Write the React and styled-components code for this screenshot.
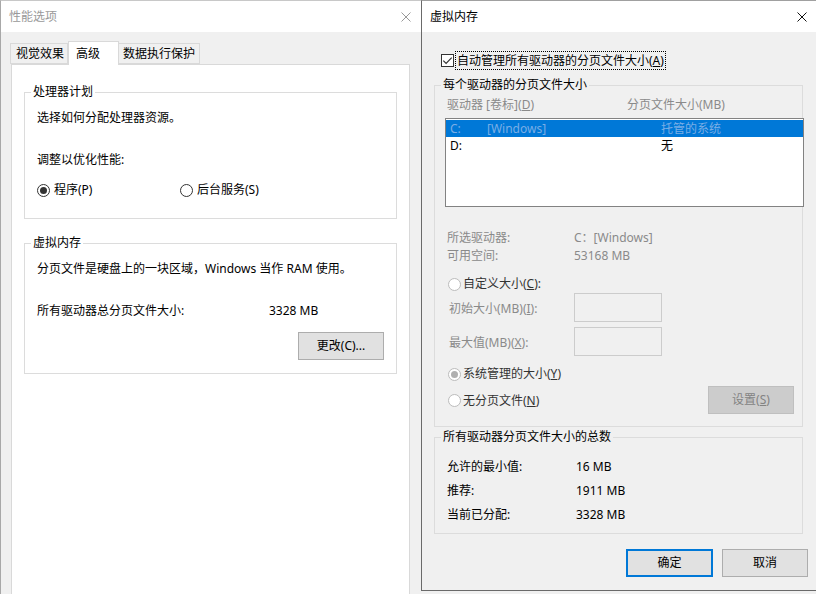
import React from 'react';
import styled, { createGlobalStyle } from 'styled-components';

const GlobalStyle = createGlobalStyle`
  html, body { margin: 0; padding: 0; }
  body {
    background: #f0f0f0;
    font-family: "Noto Sans", "Noto Sans CJK SC", sans-serif;
    font-size: 12px;
    color: #000;
  }
  * { box-sizing: border-box; }
`;

const Desktop = styled.div`
  display: flex;
  width: 816px;
  height: 594px;
  overflow: hidden;
  background: #f0f0f0;
`;

const LeftWindow = styled.div`
  flex: none;
  width: 421px;
  height: 594px;
  display: flex;
  flex-direction: column;
  background: #f0f0f0;
  border-left: 1px solid #a8a8a8;
  border-top: 1px solid #c8c8c8;
`;

const TitleBar = styled.div`
  flex: none;
  height: 31px;
  background: #fff;
  display: flex;
  align-items: center;
  justify-content: space-between;
  padding: 0 ${p => p.$pr}px 0 8px;
  color: ${p => (p.$active ? '#000' : '#999')};
  line-height: 18px;
`;

const CloseIcon = ({ color }) => (
  <svg width="10" height="10" viewBox="0 0 10 10" style={{ display: 'block' }}>
    <path d="M0.5 0.5 L9.5 9.5 M9.5 0.5 L0.5 9.5" stroke={color} strokeWidth="1" fill="none" />
  </svg>
);

const TabStrip = styled.div`
  display: flex;
  align-items: flex-end;
  margin: 9px 0 0 9px;
  height: 23px;
  position: relative;
  z-index: 1;
`;

const Tab = styled.div`
  width: ${p => p.$w}px;
  height: ${p => (p.$selected ? 24 : 21)}px;
  margin-bottom: ${p => (p.$selected ? -1 : 0)}px;
  padding-left: ${p => p.$pl}px;
  display: flex;
  align-items: center;
  border: 1px solid #d9d9d9;
  border-bottom: ${p => (p.$selected ? 'none' : '1px solid #d9d9d9')};
  border-left: ${p => (p.$first || p.$selected ? '1px solid #d9d9d9' : 'none')};
  background: ${p => (p.$selected ? '#fff' : '#f0f0f0')};
  line-height: 18px;
  white-space: nowrap;
`;

const TabPanel = styled.div`
  flex: 1;
  margin-left: 10px;
  width: 399px;
  background: #fff;
  border: 1px solid #d9d9d9;
  border-bottom: none;
  padding: 0 12px;
  display: flex;
  flex-direction: column;
`;

const Group = styled.fieldset`
  margin: ${p => p.$mt}px 0 0 0;
  border: 1px solid #dcdcdc;
  padding: 0 ${p => p.$pr ?? 12}px ${p => p.$pb}px 12px;
  min-width: 0;
  width: ${p => p.$w}px;
  display: flex;
  flex-direction: column;
  align-items: flex-start;
`;

const Legend = styled.legend`
  padding: 0 2px;
  margin-left: -6px;
  line-height: 18px;
  color: #000;
`;

const Line = styled.div`
  margin-top: ${p => p.$mt || 0}px;
  line-height: ${p => p.$lh || 18}px;
  color: ${p => (p.$dim ? '#8a8a8a' : '#000')};
  display: flex;
  align-items: center;
  white-space: nowrap;
  width: 100%;
`;

const Label = styled.span`
  display: inline-block;
  width: ${p => p.$w}px;
  padding-left: ${p => p.$pl || 0}px;
  flex: none;
`;

const RadioWrap = styled.span`
  display: inline-flex;
  align-items: center;
  width: ${p => (p.$w ? `${p.$w}px` : 'auto')};
  margin-left: ${p => p.$ml || 0}px;
  color: ${p => (p.$dim ? '#333' : '#000')};
`;

const Circle = styled.span`
  width: 13px;
  height: 13px;
  border-radius: 50%;
  border: 1px solid ${p => (p.$disabled ? '#bcbcbc' : '#333')};
  background: #fff;
  margin-right: ${p => p.$gap}px;
  display: inline-flex;
  align-items: center;
  justify-content: center;
  flex: none;
  &::after {
    content: '';
    width: 7px;
    height: 7px;
    border-radius: 50%;
    background: ${p => (p.$checked ? (p.$disabled ? '#b0b0b0' : '#333') : 'transparent')};
  }
`;

const Radio = ({ checked, disabled, children, w, ml, gap = 4 }) => (
  <RadioWrap $w={w} $ml={ml} $dim={disabled}>
    <Circle $checked={checked} $disabled={disabled} $gap={gap} />
    <span>{children}</span>
  </RadioWrap>
);

const ButtonRow = styled.div`
  margin-top: ${p => p.$mt}px;
  display: flex;
  justify-content: ${p => p.$justify || 'flex-end'};
  align-items: center;
  gap: 9px;
  width: 100%;
  padding-right: ${p => p.$pr || 0}px;
`;

const Button = styled.div`
  width: ${p => p.$w || 86}px;
  height: 28px;
  display: flex;
  align-items: center;
  justify-content: center;
  background: ${p => (p.$disabled ? '#cccccc' : '#e1e1e1')};
  border: ${p => (p.$default ? '2px solid #0078d7' : p.$disabled ? '1px solid #bfbfbf' : '1px solid #adadad')};
  color: ${p => (p.$disabled ? '#838383' : '#000')};
  margin-right: ${p => p.$mr || 0}px;
  line-height: 18px;
  flex: none;
`;

const Dialog = styled.div`
  flex: 1;
  height: 591px;
  display: flex;
  flex-direction: column;
  background: #f0f0f0;
  border-left: 1px solid #6a6a6a;
  border-top: 1px solid #a0a0a0;
  border-bottom: 1px solid #6a6a6a;
`;

const DialogBody = styled.div`
  display: flex;
  flex-direction: column;
  padding-left: 12px;
`;

const CheckRow = styled.div`
  margin: 19px 0 0 7px;
  display: flex;
  align-items: center;
`;

const CheckBox = styled.span`
  width: 13px;
  height: 13px;
  border: 1px solid #333;
  background: #fff;
  margin-right: 1px;
  display: inline-flex;
  align-items: center;
  justify-content: center;
`;

const FocusLabel = styled.span`
  border: 1px dotted #000;
  padding: 0 1px;
  line-height: 17px;
`;

const U = styled.span`
  text-decoration: underline;
`;

const ListBox = styled.div`
  margin: 4px 0 0 -2px;
  width: 359px;
  height: 89px;
  background: #fff;
  border: 1px solid #828282;
  padding: 1px 0 0 0;
  flex: none;
`;

const ListRow = styled.div`
  height: 17px;
  line-height: 17px;
  display: flex;
  padding-left: 4px;
  background: ${p => (p.$selected ? '#0078d7' : 'transparent')};
  color: ${p => (p.$selected ? '#7aaee6' : '#000')};
  white-space: nowrap;
`;

const Cell = styled.span`
  width: ${p => (p.$w ? `${p.$w}px` : 'auto')};
  flex: none;
`;

const InputRow = styled.div`
  margin-top: ${p => p.$mt}px;
  display: flex;
  align-items: center;
  color: #8a8a8a;
  white-space: nowrap;
`;

const TextInput = styled.div`
  width: 88px;
  height: 29px;
  border: 1px solid #cccccc;
  background: #f0f0f0;
`;

const Check = () => (
  <svg width="11" height="11" viewBox="0 0 11 11" style={{ display: 'block' }}>
    <path d="M1.3 5.6 L4.1 8.4 L9.7 2.6" stroke="#333" strokeWidth="1.2" fill="none" />
  </svg>
);

export default function App() {
  return (
    <>
      <GlobalStyle />
      <Desktop>
        <LeftWindow>
          <TitleBar $pr={10}>
            <span>性能选项</span>
            <CloseIcon color="#999" />
          </TitleBar>
          <TabStrip>
            <Tab $w={58} $pl={5} $first>视觉效果</Tab>
            <Tab $w={51} $pl={7} $selected>高级</Tab>
            <Tab $w={81} $pl={4}>数据执行保护</Tab>
          </TabStrip>
          <TabPanel>
            <Group $mt={18} $pb={19} $w={373}>
              <Legend>处理器计划</Legend>
              <Line $mt={8}>选择如何分配处理器资源。</Line>
              <Line $mt={24}>调整以优化性能:</Line>
              <Line $mt={12}>
                <Radio checked w={143}>程序(P)</Radio>
                <Radio>后台服务(S)</Radio>
              </Line>
            </Group>
            <Group $mt={15} $pb={13} $w={373}>
              <Legend>虚拟内存</Legend>
              <Line $mt={8}>分页文件是硬盘上的一块区域，Windows 当作 RAM 使用。</Line>
              <Line $mt={24}>
                <Label $w={232}>所有驱动器总分页文件大小:</Label>
                <span>3328 MB</span>
              </Line>
              <ButtonRow $mt={12}>
                <Button $w={86}>更改(C)...</Button>
              </ButtonRow>
            </Group>
          </TabPanel>
        </LeftWindow>

        <Dialog>
          <TitleBar $pr={9} $active>
            <span>虚拟内存</span>
            <CloseIcon color="#111" />
          </TitleBar>
          <DialogBody>
            <CheckRow>
              <CheckBox><Check /></CheckBox>
              <FocusLabel>自动管理所有驱动器的分页文件大小(<U>A</U>)</FocusLabel>
            </CheckRow>

            <Group $mt={6} $pb={12} $w={369} $pr={8}>
              <Legend>每个驱动器的分页文件大小</Legend>
              <Line $mt={2} $dim>
                <Label $w={180}>驱动器 [卷标](<U>D</U>)</Label>
                <span>分页文件大小(MB)</span>
              </Line>
              <ListBox>
                <ListRow $selected>
                  <Cell $w={37}>C:</Cell>
                  <Cell $w={174}>[Windows]</Cell>
                  <Cell>托管的系统</Cell>
                </ListRow>
                <ListRow>
                  <Cell $w={211}>D:</Cell>
                  <Cell>无</Cell>
                </ListRow>
              </ListBox>
              <Line $mt={22} $dim>
                <Label $w={127}>所选驱动器:</Label>
                <span>C：[Windows]</span>
              </Line>
              <Line $dim>
                <Label $w={127}>可用空间:</Label>
                <span>53168 MB</span>
              </Line>
              <Line $mt={10}>
                <Radio disabled ml={1} gap={2}>自定义大小(<U>C</U>):</Radio>
              </Line>
              <InputRow $mt={0}>
                <Label $w={127} $pl={2}>初始大小(MB)(<U>I</U>):</Label>
                <TextInput />
              </InputRow>
              <InputRow $mt={5}>
                <Label $w={127} $pl={2}>最大值(MB)(<U>X</U>):</Label>
                <TextInput />
              </InputRow>
              <Line $mt={9}>
                <Radio disabled checked ml={1} gap={2}>系统管理的大小(<U>Y</U>)</Radio>
              </Line>
              <ButtonRow $mt={3} $justify="space-between">
                <Radio disabled ml={1} gap={2}>无分页文件(<U>N</U>)</Radio>
                <Button $disabled $w={86}>设置(<U>S</U>)</Button>
              </ButtonRow>
            </Group>

            <Group $mt={1} $pb={6} $w={369} $pr={8}>
              <Legend>所有驱动器分页文件大小的总数</Legend>
              <Line $mt={9} $lh={24}>
                <Label $w={129}>允许的最小值:</Label>
                <span>16 MB</span>
              </Line>
              <Line $lh={24}>
                <Label $w={129}>推荐:</Label>
                <span>1911 MB</span>
              </Line>
              <Line $lh={24}>
                <Label $w={129}>当前已分配:</Label>
                <span>3328 MB</span>
              </Line>
            </Group>

            <ButtonRow $mt={15} $pr={8}>
              <Button $default $w={87}>确定</Button>
              <Button $w={86}>取消</Button>
            </ButtonRow>
          </DialogBody>
        </Dialog>
      </Desktop>
    </>
  );
}
